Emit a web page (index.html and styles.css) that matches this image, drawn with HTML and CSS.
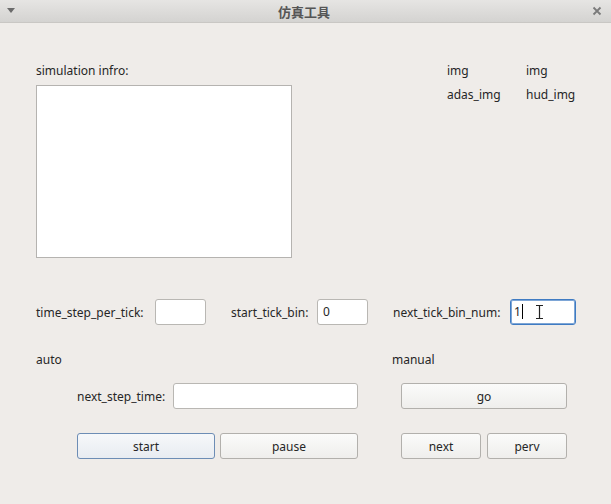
FILE: index.html
```html
<!DOCTYPE html>
<html>
<head>
<meta charset="utf-8">
<link rel="stylesheet" href="styles.css">
</head>
<body>
<div class="window">
  <div class="titlebar">
    <svg class="menu-arrow" width="10" height="8" viewBox="0 0 10 8"><path d="M1 2 L9 2 L5 7 Z" fill="#6b6b6b"/></svg>
    <div class="title">仿真工具</div>
    <svg class="close" width="10" height="10" viewBox="0 0 10 10"><path d="M1.5 1.5 L8.5 8.5 M8.5 1.5 L1.5 8.5" stroke="#7a7a7a" stroke-width="1.8"/></svg>
  </div>
  <div class="content">
    <div class="top">
      <div class="info">
        <div class="lbl">simulation infro:</div>
        <div class="infobox"></div>
      </div>
      <div class="imgs">
        <span>img</span><span>img</span>
        <span>adas_img</span><span>hud_img</span>
      </div>
    </div>
    <div class="params">
      <div class="field f1"><span>time_step_per_tick:</span><div class="input w50"></div></div>
      <div class="field f2"><span>start_tick_bin:</span><div class="input w50">0</div></div>
      <div class="field f3"><span>next_tick_bin_num:</span><div class="input focus w65">1<i class="caret"></i>
        <svg class="ibeam" width="9" height="16" viewBox="0 0 9 16"><path d="M1 1.5 H8 M1 14.5 H8 M4.5 1.5 V14.5" stroke="#fff" stroke-width="3"/><path d="M1 1.5 H8 M1 14.5 H8 M4.5 1.5 V14.5" stroke="#222" stroke-width="1.2"/></svg>
      </div></div>
    </div>
    <div class="lower">
      <div class="auto">
        <div class="lbl">auto</div>
        <div class="block">
          <div class="steprow"><span>next_step_time:</span><div class="input grow"></div></div>
          <div class="btnrow">
            <button class="btn default">start</button>
            <button class="btn">pause</button>
          </div>
        </div>
      </div>
      <div class="manual">
        <div class="lbl">manual</div>
        <div class="block">
          <div class="steprow"><button class="btn full">go</button></div>
          <div class="btnrow">
            <button class="btn">next</button>
            <button class="btn">perv</button>
          </div>
        </div>
      </div>
    </div>
  </div>
</div>
</body>
</html>
```
FILE: styles.css
```css
* { box-sizing: border-box; }
html, body { margin: 0; padding: 0; }
body {
  width: 611px;
  height: 504px;
  background: #efece9;
  font-family: "Noto Sans", "Noto Sans CJK SC", sans-serif;
  font-size: 12px;
  color: #262626;
  overflow: hidden;
}
.titlebar {
  height: 23px;
  background: linear-gradient(#e6e5e3, #d4d3d1);
  border-bottom: 1px solid #c9c7c4;
  display: flex;
  align-items: center;
  justify-content: space-between;
  padding: 0 7px 0 6px;
}
.title {
  font-family: "Noto Sans CJK SC", sans-serif;
  font-weight: bold;
  font-size: 13px;
  color: #555;
}
.menu-arrow { margin-top: -2px; }
.close { margin-right: 2px; }
.content {
  padding: 39px 0 0 36px;
}
.top {
  display: flex;
  align-items: flex-start;
}
.info { width: 411px; }
.lbl { line-height: 17px; height: 17px; }
.infobox {
  margin-top: 6px;
  width: 256px;
  height: 173px;
  background: #fff;
  border: 1px solid #b5b3b0;
}
.imgs {
  display: grid;
  grid-template-columns: 79px auto;
  row-gap: 7px;
  line-height: 17px;
}
.params {
  display: flex;
  gap: 25px;
  margin-top: 41px;
  height: 26px;
}
.field {
  display: flex;
  align-items: center;
  justify-content: space-between;
}
.f1 { width: 170px; }
.f2 { width: 137px; }
.f3 { width: 183px; }
.input {
  height: 26px;
  background: #fff;
  border: 1px solid #b9b7b3;
  border-radius: 3px;
  padding: 0 5px;
  line-height: 24px;
  position: relative;
}
.w50 { width: 51px; }
.w65 { width: 66px; }
.focus {
  border: 1px solid #3f7bc2;
  box-shadow: inset 0 0 0 1px #7ea6d6;
  padding-left: 3px;
}
.caret {
  display: inline-block;
  width: 1px;
  height: 15px;
  background: #000;
  vertical-align: -3px;
  margin-left: 1px;
}
.ibeam {
  position: absolute;
  left: 24px;
  top: 4px;
}
.lower {
  display: flex;
  margin-top: 26px;
}
.auto { width: 356px; }
.auto .block { margin-left: 41px; width: 281px; }
.manual .block { margin-left: 9px; width: 166px; }
.steprow {
  margin-top: 15px;
  display: flex;
  align-items: center;
  justify-content: space-between;
  height: 26px;
}
.grow { width: 185px; }
.btnrow {
  margin-top: 24px;
  display: flex;
  justify-content: space-between;
}
.btn {
  font-family: "Noto Sans", sans-serif;
  font-size: 12px;
  color: #262626;
  height: 26px;
  padding: 0;
  border: 1px solid #b2b0ac;
  border-radius: 3px;
  background: linear-gradient(#fbfbfa, #efeeec);
  width: 138px;
}
.manual .btn { width: 80px; }
.manual .btn.full { width: 166px; }
.btn.default {
  border-color: #6d8db5;
  background: linear-gradient(#f6f8fa, #e8ecf1);
}
```
